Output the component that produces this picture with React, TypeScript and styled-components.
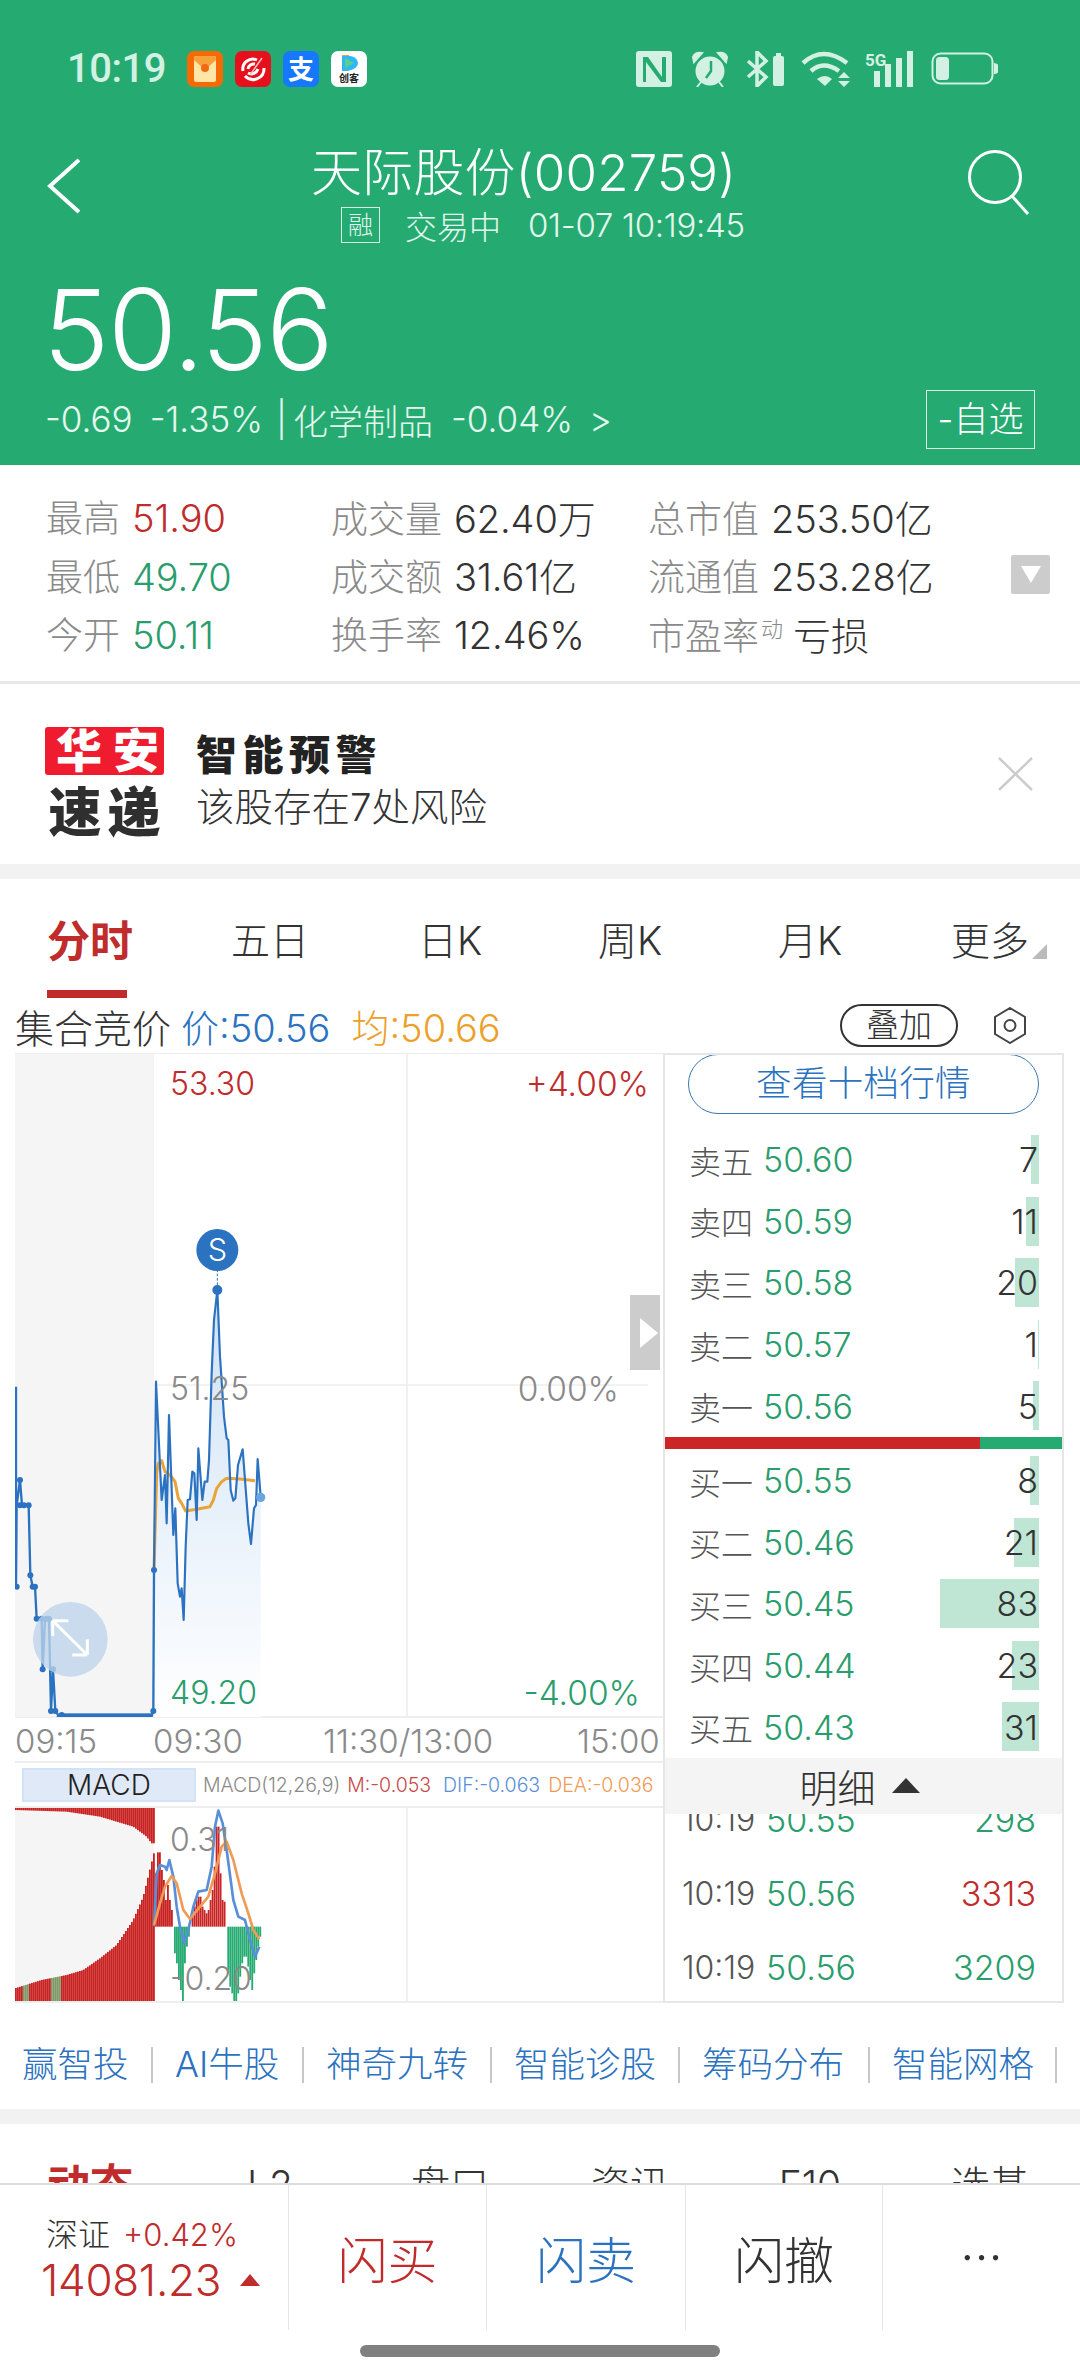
import { Fragment } from 'react'
import styled, { createGlobalStyle } from 'styled-components'

const GREEN = '#25ab71'
const RED = '#c02c2c'
const BLUE = '#2b72c0'
const UP = '#2a9d6c'
const FONT = `Inter, "Noto Sans CJK SC", sans-serif`

const GlobalStyle = createGlobalStyle`
  html, body {
    margin: 0;
    padding: 0;
    background: #fff;
    font-family: ${FONT};
  }
  * { box-sizing: border-box; }
`

const Page = styled.div`
  width: 1080px;
  height: 2378px;
  display: flex;
  flex-direction: column;
  overflow: hidden;
  background: #fff;
  color: #333;
`

const Scroll = styled.div`
  flex: 1;
  min-height: 0;
  overflow: hidden;
`

const Header = styled.header`
  height: 465px;
  background: ${GREEN};
  color: #fff;
`

const StatusBar = styled.div`
  height: 138px;
  padding: 51px 82px 0 67px;
  display: flex;
  align-items: flex-start;
  color: #d3f1e3;
`

const Clock = styled.span`
  font-family: Roboto, sans-serif;
  font-size: 40px;
  font-weight: 500;
  line-height: 36px;
  width: 120px;
  letter-spacing: -0.5px;
`

const AppIcons = styled.div`
  display: flex;
  gap: 12px;
`

const SysIcons = styled.div`
  margin-left: auto;
  display: flex;
  align-items: center;
  height: 36px;
`

const NavRow = styled.div`
  height: 68px;
  display: flex;
  align-items: center;
  padding: 0 50px 0 47px;
`

const BackButton = styled.svg`
  flex: none;
  margin-top: 28px;
`

const Title = styled.h1`
  margin: -6px 0 0 231px;
  font-size: 51px;
  font-weight: 300;
  white-space: nowrap;
  letter-spacing: 0.2px;
`

const SearchButton = styled.svg`
  margin-left: auto;
  margin-top: 22px;
`

const SubRow = styled.div`
  height: 38px;
  padding-left: 341px;
  display: flex;
  align-items: center;
  font-size: 32px;
  font-weight: 300;
  color: #e4f7ee;
  white-space: nowrap;
`

const RongTag = styled.span`
  width: 39px;
  height: 36px;
  border: 1px solid #d8f3e6;
  font-size: 25px;
  line-height: 34px;
  text-align: center;
  margin-right: 25px;
`

const SubTime = styled.span`
  margin-left: 27px;
  font-size: 33px;
  letter-spacing: -0.3px;
`

const Price = styled.div`
  margin-top: 21px;
  height: 124px;
  padding-left: 43px;
  font-size: 112px;
  line-height: 128px;
  font-weight: 300;
  letter-spacing: -1.5px;
`

const ChangeRow = styled.div`
  height: 60px;
  padding: 0 45px 0 45px;
  display: flex;
  align-items: center;
  font-size: 35px;
  font-weight: 300;
  color: #e4f7ee;
  white-space: nowrap;
`

const ChangeItem = styled.span<{ $gap: number }>`
  margin-left: ${p => p.$gap}px;
`

const Favorite = styled.span`
  margin-left: auto;
  width: 109px;
  height: 59px;
  border: 1px solid #d8f3e6;
  font-size: 35px;
  line-height: 57px;
  text-align: center;
  color: #fff;
`

const Stats = styled.section`
  height: 219px;
  padding: 22px 0 0 46px;
  display: grid;
  grid-template-columns: 285px 317px 363px 39px;
  grid-auto-rows: 58.5px;
  align-items: center;
  border-bottom: 3px solid #e8e8e8;
  white-space: nowrap;
`

const StatLabel = styled.span`
  font-size: 37px;
  font-weight: 300;
  color: #8a8a8a;
  margin-right: 12px;
`

const StatValue = styled.span<{ $color?: string }>`
  font-size: 38px;
  font-weight: 300;
  color: ${p => p.$color ?? '#333'};
  letter-spacing: -0.1px;
`

const StatNote = styled.sup`
  font-size: 22px;
  font-weight: 300;
  color: #8a8a8a;
  margin-left: -10px;
  margin-right: 10px;
  line-height: 0;
  position: relative;
  top: -6px;
`

const StatToggle = styled.span`
  width: 39px;
  height: 39px;
  background: #ccc;
  border-radius: 2px;
  display: flex;
  align-items: center;
  justify-content: center;
  &::after {
    content: '';
    border-left: 10px solid transparent;
    border-right: 10px solid transparent;
    border-top: 17px solid #fff;
  }
`

const Alert = styled.section`
  height: 180px;
  padding: 14px 0 0 45px;
  display: flex;
  align-items: center;
  gap: 32px;
`

const Badge = styled.div`
  width: 119px;
  display: flex;
  flex-direction: column;
  gap: 16px;
  align-items: center;
`

const BadgeTop = styled.div`
  width: 119px;
  height: 48px;
  background: #ee1c2e;
  border-radius: 3px;
  color: #fff;
  font-size: 46px;
  font-weight: 900;
  line-height: 46px;
  letter-spacing: 11px;
  text-indent: 11px;
  text-align: center;
  white-space: nowrap;
`

const BadgeBottom = styled.div`
  font-size: 53px;
  font-weight: 900;
  line-height: 44px;
  letter-spacing: 6px;
  margin-right: -6px;
  color: #2f2f2f;
  white-space: nowrap;
`

const AlertText = styled.div`
  display: flex;
  flex-direction: column;
  gap: 8px;
`

const AlertTitle = styled.div`
  font-size: 41px;
  font-weight: 900;
  line-height: 44px;
  letter-spacing: 5.5px;
  color: #222;
`

const AlertBody = styled.div`
  font-size: 38.5px;
  font-weight: 300;
  line-height: 44px;
  color: #333;
`

const Close = styled.svg`
  margin-left: auto;
  margin-right: 47px;
  margin-top: -14px;
`

const Band = styled.div`
  height: 15px;
  background: #f2f2f2;
`

const Tabs = styled.nav`
  height: 119px;
  display: grid;
  grid-template-columns: repeat(6, 180px);
`

const Tab = styled.div<{ $active?: boolean }>`
  position: relative;
  text-align: center;
  padding-top: 37px;
  font-size: ${p => (p.$active ? 43 : 39)}px;
  font-weight: ${p => (p.$active ? 700 : 300)};
  line-height: 50px;
  color: ${p => (p.$active ? RED : '#333')};
  &::after {
    content: '';
    display: ${p => (p.$active ? 'block' : 'none')};
    position: absolute;
    left: 47px;
    bottom: 0;
    width: 80px;
    height: 8px;
    background: ${RED};
  }
`

const MoreMark = styled.span`
  position: absolute;
  right: 33px;
  top: 65px;
  border-left: 15px solid transparent;
  border-bottom: 15px solid #bbb;
`

const ChartBar = styled.div`
  height: 55px;
  padding: 0 54px 0 15px;
  display: flex;
  align-items: center;
  font-size: 39px;
  font-weight: 300;
  white-space: nowrap;
`

const ChartStat = styled.span<{ $color: string; $gap: number }>`
  margin-left: ${p => p.$gap}px;
  font-size: 38px;
  color: ${p => p.$color};
`

const Overlay = styled.span`
  margin-left: auto;
  width: 118px;
  height: 43px;
  border: 2px solid #333;
  border-radius: 22px;
  font-size: 33px;
  line-height: 38px;
  text-align: center;
  margin-right: 36px;
`

const ChartGrid = styled.section`
  margin-left: 15px;
  height: 950px;
  width: 1049px;
  display: grid;
  grid-template-columns: 648px 401px;
`

const ChartColumn = styled.div`
  display: flex;
  flex-direction: column;
  min-width: 0;
`

const PricePane = styled.div`
  position: relative;
  height: 665px;
  border-top: 1px solid #eee;
  border-bottom: 2px solid #eee;
`

const PaneSvg = styled.svg`
  position: absolute;
  left: 0;
  top: 0;
  display: block;
`

const AxisLabel = styled.span<{ $top: number; $left?: number; $right?: number; $color: string; $size?: number }>`
  position: absolute;
  top: ${p => p.$top}px;
  ${p => (p.$left !== undefined ? `left: ${p.$left}px;` : '')}
  ${p => (p.$right !== undefined ? `right: ${p.$right}px;` : '')}
  color: ${p => p.$color};
  font-size: ${p => p.$size ?? 32}px;
  line-height: 40px;
  font-weight: 300;
`

const SideHandle = styled.div`
  position: absolute;
  right: 3px;
  top: 241px;
  width: 30px;
  height: 75px;
  background: #ccc;
  display: flex;
  align-items: center;
  justify-content: flex-end;
  padding-right: 2px;
  &::after {
    content: '';
    border-top: 15px solid transparent;
    border-bottom: 15px solid transparent;
    border-left: 18px solid #fff;
  }
`

const TimeRow = styled.div`
  height: 43px;
  display: flex;
  font-size: 33px;
  font-weight: 300;
  line-height: 47px;
  color: #8a8a8a;
  white-space: nowrap;
`

const TimeMark = styled.span<{ $width: number }>`
  flex: none;
  width: ${p => p.$width}px;
`

const MacdHeader = styled.div`
  height: 47px;
  border-top: 2px solid #eee;
  border-bottom: 2px solid #eee;
  padding-left: 7px;
  display: flex;
  align-items: center;
  font-size: 19.5px;
  font-weight: 300;
  white-space: nowrap;
`

const MacdTab = styled.span`
  flex: none;
  width: 174px;
  height: 34px;
  background: #dfe9f7;
  border: 2px solid #d3e2f6;
  text-align: center;
  font-size: 28px;
  line-height: 30px;
  font-weight: 300;
  color: #222;
  margin-right: 7px;
`

const MacdItem = styled.span<{ $color: string; $gap: number }>`
  color: ${p => p.$color};
  margin-left: ${p => p.$gap}px;
`

const MacdPane = styled.div`
  position: relative;
  height: 195px;
  border-bottom: 2px solid #eee;
  overflow: hidden;
`

const Book = styled.aside`
  height: 950px;
  border: 2px solid #e6e6e6;
  display: flex;
  flex-direction: column;
  overflow: hidden;
`

const TenLevel = styled.div`
  flex: none;
  margin: -1px 23px 0 23px;
  height: 60px;
  border: 1.5px solid #3a78b0;
  border-radius: 30px;
  color: ${BLUE};
  font-size: 35.5px;
  font-weight: 300;
  line-height: 57px;
  text-align: center;
  letter-spacing: 0.3px;
`

const Levels = styled.div<{ $top: number }>`
  flex: none;
  padding-top: ${p => p.$top}px;
`

const Level = styled.div`
  height: 61.6px;
  padding: 0 24px 0 24px;
  display: flex;
  align-items: center;
  position: relative;
`

const LevelName = styled.span`
  flex: none;
  font-size: 32px;
  font-weight: 300;
  color: #555;
  width: 74px;
`

const LevelPrice = styled.span`
  font-size: 34px;
  font-weight: 300;
  color: ${UP};
`

const LevelQty = styled.span`
  position: relative;
  margin-left: auto;
  font-size: 34px;
  font-weight: 300;
  color: #333;
  z-index: 1;
`

const VolumeBar = styled.span`
  position: absolute;
  right: 23px;
  top: 6px;
  height: 49px;
  background: #bfe6d4;
`

const Ratio = styled.div`
  flex: none;
  height: 12px;
  display: flex;
  background: ${GREEN};
`

const RatioBuy = styled.span`
  background: #cc2525;
`

const DetailBar = styled.div`
  flex: none;
  height: 56px;
  background: #f4f4f4;
  display: flex;
  align-items: center;
  justify-content: center;
  gap: 16px;
  padding-right: 8px;
  font-size: 38px;
  font-weight: 300;
  color: #333;
  position: relative;
  z-index: 1;
  &::after {
    content: '';
    border-left: 14px solid transparent;
    border-right: 14px solid transparent;
    border-bottom: 15px solid #333;
  }
`

const Trades = styled.div`
  flex: 1;
  min-height: 0;
  overflow: hidden;
`

const TradeList = styled.div`
  margin-top: -31px;
`

const Trade = styled.div<{ $color: string }>`
  height: 74px;
  padding: 0 26px 0 17px;
  display: flex;
  align-items: center;
  font-size: 34px;
  font-weight: 300;
  color: ${p => p.$color};
`

const TradeTime = styled.span`
  flex: none;
  font-size: 32px;
  color: #555;
  width: 84px;
`

const TradePrice = styled.span`
  color: ${UP};
  font-size: 34px;
  flex: 1;
`

const LinkRow = styled.div`
  height: 106px;
  padding: 18px 0 0 22px;
  display: flex;
  align-items: center;
  white-space: nowrap;
`

const ToolLink = styled.span<{ $width: number }>`
  width: ${p => p.$width}px;
  flex: none;
  height: 36px;
  line-height: 36px;
  color: ${BLUE};
  font-size: 35.5px;
  font-weight: 300;
  position: relative;
  &::after {
    content: '';
    position: absolute;
    right: 22px;
    top: 0;
    width: 2px;
    height: 36px;
    background: #c8c8c8;
  }
`

const SubTabs = styled.div`
  display: grid;
  grid-template-columns: repeat(6, 180px);
  padding-top: 36px;
`

const SubTab = styled.span<{ $active?: boolean }>`
  text-align: center;
  font-size: ${p => (p.$active ? 43 : 39)}px;
  font-weight: ${p => (p.$active ? 700 : 300)};
  line-height: 50px;
  color: ${p => (p.$active ? RED : '#333')};
`

const Footer = styled.footer`
  flex: none;
  height: 195px;
  background: #fff;
  border-top: 2px solid #ddd;
`

const FooterCells = styled.div`
  height: 145px;
  display: grid;
  grid-template-columns: 288px 198px 199px 197px 198px;
`

const IndexCell = styled.div`
  padding: 31px 0 0 41px;
  white-space: nowrap;
`

const IndexName = styled.div`
  font-size: 32px;
  line-height: 38px;
  font-weight: 300;
  padding-left: 5px;
`

const IndexChange = styled.span`
  color: ${RED};
  margin-left: 13px;
  font-size: 31px;
`

const IndexValue = styled.div`
  margin-top: 2px;
  font-size: 44px;
  line-height: 48px;
  font-weight: 300;
  color: ${RED};
  display: flex;
  align-items: center;
  letter-spacing: -0.3px;
  &::after {
    content: '';
    margin-left: 19px;
    border-left: 10px solid transparent;
    border-right: 10px solid transparent;
    border-bottom: 12px solid ${RED};
  }
`

const ActionCell = styled.div<{ $color: string }>`
  border-left: 1px solid #e6e6e6;
  display: flex;
  align-items: center;
  justify-content: center;
  padding-bottom: 2px;
  font-size: 50px;
  font-weight: 300;
  color: ${p => p.$color};
`

const HomeBar = styled.div`
  width: 360px;
  height: 12px;
  margin: 15px auto 0;
  border-radius: 6px;
  background: #808080;
`

const statRows: [string, string, string?, string?][] = [
  ['最高', '51.90', RED],
  ['成交量', '62.40万'],
  ['总市值', '253.50亿'],
  ['最低', '49.70', UP],
  ['成交额', '31.61亿'],
  ['流通值', '253.28亿'],
  ['今开', '50.11', UP],
  ['换手率', '12.46%'],
  ['市盈率', '亏损', undefined, '动'],
]

const asks = [
  ['卖五', '50.60', '7', 8],
  ['卖四', '50.59', '11', 13],
  ['卖三', '50.58', '20', 24],
  ['卖二', '50.57', '1', 1],
  ['卖一', '50.56', '5', 6],
] as const

const bids = [
  ['买一', '50.55', '8', 9],
  ['买二', '50.46', '21', 25],
  ['买三', '50.45', '83', 99],
  ['买四', '50.44', '23', 27],
  ['买五', '50.43', '31', 37],
] as const

const tools: [string, number][] = [
  ['赢智投', 153],
  ['AI牛股', 151],
  ['神奇九转', 188],
  ['智能诊股', 188],
  ['筹码分布', 190],
  ['智能网格', 187],
]

// chart coordinates are in the 3x scale the traces were measured at
const path = (pts: number[][]) => pts.map((p, i) => `${i ? 'L' : 'M'}${p[0]} ${p[1]}`).join(' ')

const pricePts = [
  [462, 690], [468, 125], [485, 480], [495, 405], [500, 550], [507, 225], [520, 585], [526, 505], [533, 730],
  [540, 770], [545, 745], [551, 840], [557, 620], [563, 480], [570, 478], [577, 395], [583, 400], [590, 540],
  [595, 325], [607, 480], [614, 425], [622, 425], [627, 360], [635, 100], [642, -60], [652, -150], [660, 50], [672, 230],
  [680, 295], [685, 300], [692, 450], [700, 482], [706, 475], [714, 375], [728, 328], [745, 550], [753, 612],
  [762, 505], [768, 495], [773, 357], [782, 470],
]

const auctionPts = [
  [48, 140], [48, 740], [50, 496], [60, 420], [66, 496], [86, 496], [91, 706], [98, 740], [105, 740], [110, 836], [125, 836],
  [128, 988], [135, 836], [147, 836], [153, 1113], [159, 988], [166, 1113], [178, 1130], [185, 1128], [455, 1128], [460, 1113], [462, 690],
]

const auctionDots = [
  [50, 740], [60, 420], [86, 496], [60, 496], [72, 496], [91, 706], [98, 740], [105, 740], [110, 836], [125, 836], [140, 836], [147, 836],
  [128, 988], [159, 988], [153, 1113], [166, 1113], [178, 1133], [185, 1125], [460, 1113], [462, 690],
]

const avgPts = [
  [462, 690], [470, 400], [475, 370], [485, 362], [495, 395], [510, 405], [525, 425], [535, 475], [545, 490], [557, 513],
  [590, 508], [630, 500], [640, 480], [650, 445], [665, 425], [680, 415], [720, 417], [765, 422],
]

const difPts = [
  [462, 678], [470, 520], [480, 495], [495, 500], [500, 510], [508, 480], [520, 530], [530, 620], [540, 680], [553, 730],
  [565, 690], [580, 620], [595, 575], [620, 570], [635, 500], [645, 380], [655, 332], [668, 370], [680, 450], [700, 600],
  [715, 650], [735, 660], [750, 720], [765, 770], [778, 740],
]

const deaPts = [
  [462, 675], [480, 610], [495, 560], [515, 528], [530, 550], [550, 630], [570, 657], [600, 620], [625, 590], [645, 520],
  [665, 440], [680, 425], [700, 480], [725, 580], [745, 640], [760, 690], [778, 718],
]

const upBars = [
  [468, 520], [474, 457], [480, 457], [486, 510], [492, 540], [498, 600], [504, 555], [510, 600], [516, 630],
  [578, 640], [584, 620], [590, 600], [596, 590], [602, 590], [608, 620], [614, 630], [620, 640], [626, 630], [632, 600],
  [638, 570], [644, 500], [650, 380], [656, 380], [662, 520], [668, 600], [674, 605],
]

const downBars = [
  [525, 760], [531, 790], [537, 840], [543, 870], [549, 905], [555, 790], [561, 740], [567, 710],
  [685, 820], [691, 860], [697, 880], [703, 905], [709, 905], [715, 880], [721, 830], [727, 790], [733, 770], [739, 770],
  [745, 800], [751, 840], [757, 870], [763, 820], [769, 780], [775, 740], [781, 710],
]

const lerp = (pts: number[][], x: number) => {
  for (let i = 1; i < pts.length; i++) {
    if (x <= pts[i][0]) {
      const [x0, y0] = pts[i - 1]
      const [x1, y1] = pts[i]
      return y0 + ((y1 - y0) * (x - x0)) / (x1 - x0)
    }
  }
  return pts[pts.length - 1][1]
}

const lowerEdge = [[45, 865], [125, 840], [200, 825], [250, 810], [300, 775], [350, 735], [400, 660], [430, 590], [462, 460]]
const upperEdge = [[45, 330], [200, 335], [300, 350], [400, 380], [440, 410], [455, 430], [462, 430]]
const auctionBars = Array.from({ length: 70 }, (_, i) => 48 + i * 6)

const Logo = ({ children, bg }: { children: React.ReactNode; bg: string }) => (
  <svg width="36" height="36" viewBox="0 0 36 36">
    <rect width="36" height="36" rx="7" fill={bg} />
    {children}
  </svg>
)

const PricePaneDrawing = () => (
  <PaneSvg width="648" height="663" viewBox="45 -858 1944 1989">
    <rect x="45" y="-858" width="417" height="1989" fill="#f5f5f5" />
    <line x1="462" y1="135" x2="1944" y2="135" stroke="#eee" strokeWidth="5" />
    <line x1="1221" y1="-858" x2="1221" y2="1131" stroke="#eee" strokeWidth="5" />
    <defs>
      <linearGradient id="priceFill" x1="0" y1="0" x2="0" y2="1">
        <stop offset="0" stopColor="#cfe2f6" />
        <stop offset="1" stopColor="#ffffff" />
      </linearGradient>
    </defs>
    <path d={`${path(pricePts)} L782 1131 L462 1131 Z`} fill="url(#priceFill)" />
    <path d={path(avgPts)} fill="none" stroke="#e8a33a" strokeWidth="9" strokeLinejoin="round" />
    <path d={path(auctionPts)} fill="none" stroke={BLUE} strokeWidth="7" strokeLinejoin="round" />
    <path d={path(pricePts)} fill="none" stroke={BLUE} strokeWidth="6.5" strokeLinejoin="round" />
    {auctionDots.map(([x, y]) => (
      <circle key={`${x}-${y}`} cx={x} cy={y} r="9" fill={BLUE} />
    ))}
    <rect x="180" y="1120" width="278" height="15" fill={BLUE} />
    <circle cx="782" cy="472" r="14" fill="#6aa5e0" />
    <circle cx="652" cy="-150" r="15" fill={BLUE} />
    <line x1="652" y1="-165" x2="652" y2="-213" stroke={BLUE} strokeWidth="3" strokeDasharray="8 5" />
    <circle cx="652" cy="-270" r="63" fill={BLUE} />
    <text x="652" y="-237" textAnchor="middle" fontSize="92" fontWeight="300" fontFamily="Inter, sans-serif" fill="#fff">S</text>
    <circle cx="211" cy="898" r="112" fill="#bcd3ea" fillOpacity="0.78" />
    <path d="M158 842 L262 945 M158 842 H205 M158 842 V888 M262 945 H217 M262 945 V898" fill="none" stroke="#fff" strokeWidth="9" />
  </PaneSvg>
)

const MacdDrawing = () => (
  <PaneSvg width="648" height="193" viewBox="45 324 1944 579">
    <rect x="45" y="324" width="417" height="579" fill="#f5f5f5" />
    <line x1="1221" y1="324" x2="1221" y2="909" stroke="#eee" strokeWidth="5" />
    {auctionBars.map(x => {
      const low = lerp(lowerEdge, x)
      const odd = (x > 66 && x < 90) || (x > 154 && x < 184)
      return (
        <g key={x}>
          <rect x={x - 3} y={low} width="5.5" height={909 - low} fill={odd ? '#7f9a68' : '#c92222'} />
          <rect x={x - 3} y="324" width="5.5" height={lerp(upperEdge, x) - 324} fill="#c92222" />
        </g>
      )
    })}
    {upBars.map(([x, y]) => (
      <rect key={x} x={x - 3} y={y} width="5.5" height={680 - y} fill="#c92222" />
    ))}
    {downBars.map(([x, y]) => (
      <rect key={x} x={x - 3} y="680" width="5.5" height={y - 680} fill={GREEN} />
    ))}
    <path d={path(difPts)} fill="none" stroke="#5a8fd8" strokeWidth="8" strokeLinejoin="round" />
    <path d={path(deaPts)} fill="none" stroke="#ef9a55" strokeWidth="8" strokeLinejoin="round" />
  </PaneSvg>
)

export default function App() {
  return (
    <Page>
      <GlobalStyle />
      <Scroll>
        <Header>
          <StatusBar>
            <Clock>10:19</Clock>
            <AppIcons>
              <Logo bg="#f66a05">
                <rect x="7" y="5" width="22" height="26" rx="2" fill="#ffe5a6" />
                <path d="M7 9 L18 19 L29 9 V7 a2 2 0 0 0-2-2 H9 a2 2 0 0 0-2 2 Z" fill="#f7a13c" />
                <circle cx="18" cy="17" r="4" fill="#ef6a10" />
              </Logo>
              <Logo bg="#e60f1b">
                <path d="M8 20 a10 10 0 0 1 14-11 M10 25 a11 11 0 0 0 19-8 M13 22 a7 7 0 0 0 10-4 M13 18 a6 6 0 0 1 7-5" fill="none" stroke="#fff" strokeWidth="3" />
                <path d="M15 24 L27 7" stroke="#f8c0c0" strokeWidth="1.5" />
              </Logo>
              <Logo bg="#1677ff">
                <text x="18" y="28" textAnchor="middle" fontSize="26" fontWeight="700" fill="#fff" fontFamily="'Noto Sans CJK SC', sans-serif">支</text>
              </Logo>
              <Logo bg="#ffffff">
                <path d="M11 4 L11 20 L18 20 L18 4 Z" fill="#f6a623" />
                <path d="M11 5 Q26 3 27 12 Q26 20 11 20 Z" fill="#2fb7f5" />
                <path d="M14 7 L23 12 L14 17 Z" fill="#59d08b" />
                <text x="18" y="31" textAnchor="middle" fontSize="10" fontWeight="700" fill="#222" fontFamily="'Noto Sans CJK SC', sans-serif">创客</text>
              </Logo>
            </AppIcons>
            <SysIcons>
              <svg width="362" height="36" viewBox="0 0 362 36" fill="currentColor">
                <path fillRule="evenodd" d="M3 0 H33 a3 3 0 0 1 3 3 V33 a3 3 0 0 1-3 3 H3 a3 3 0 0 1-3-3 V3 a3 3 0 0 1 3-3 Z M7 6 V31 H10 V11 L25 31 H30 V6 H26 V26 L12 6 Z" />
                <g transform="translate(56 0)">
                  <circle cx="18" cy="20" r="14.5" />
                  <path d="M2 11 L10 2 Q3 1 1 6 Z M34 11 L26 2 Q33 1 35 6 Z M9 31 L5 36 M27 31 L31 36" stroke="currentColor" strokeWidth="2" />
                  <path d="M19 10 V20 L14 27" fill="none" stroke={GREEN} strokeWidth="2.5" />
                </g>
                <g transform="translate(110 0)">
                  <path d="M2 10 L20 26 L11 35 V1 L20 10 L2 26" fill="none" stroke="currentColor" strokeWidth="3.5" />
                  <rect x="27" y="5" width="11" height="30" rx="2" />
                  <rect x="30" y="2" width="5" height="3" />
                </g>
                <g transform="translate(165 0)" fill="none" stroke="currentColor" strokeWidth="4.5">
                  <path d="M2 12 Q22 -6 46 12 M10 20 Q22 9 38 20" />
                  <path d="M16 28 L24 35 L31 28 Q24 22 16 28 Z" fill="currentColor" stroke="none" />
                  <path d="M38 28 L44 22 L50 28 Z M38 31 H50 L44 37 Z" fill="currentColor" stroke="none" transform="translate(-1 -1)" />
                </g>
                <g transform="translate(229 0)">
                  <text x="0" y="15" fontSize="17" fontWeight="700" fontFamily="Roboto, sans-serif">5G</text>
                  <rect x="9" y="20" width="6" height="16" />
                  <rect x="20" y="13" width="6" height="23" />
                  <rect x="31" y="7" width="6" height="29" />
                  <rect x="42" y="0" width="6" height="36" />
                </g>
                <g transform="translate(295 1)">
                  <rect x="1.5" y="1.5" width="60" height="30" rx="8" fill="none" stroke="currentColor" strokeWidth="2" />
                  <rect x="5" y="5" width="13" height="23" rx="3.5" />
                  <path d="M63 11 a5 5 0 0 1 0 11 Z" />
                </g>
              </svg>
            </SysIcons>
          </StatusBar>
          <NavRow>
            <BackButton width="33" height="56" viewBox="0 0 33 56" fill="none" stroke="#fff" strokeWidth="4">
              <path d="M32 2 L3 28 L32 54" />
            </BackButton>
            <Title>天际股份(002759)</Title>
            <SearchButton width="64" height="66" viewBox="0 0 64 66" fill="none" stroke="#fff" strokeWidth="3">
              <circle cx="29" cy="27" r="25.5" />
              <path d="M46 46 L62 64" />
            </SearchButton>
          </NavRow>
          <SubRow>
            <RongTag>融</RongTag>
            <span>交易中</span>
            <SubTime>01-07 10:19:45</SubTime>
          </SubRow>
          <Price>50.56</Price>
          <ChangeRow>
            <span>-0.69</span>
            <ChangeItem $gap={17}>-1.35%</ChangeItem>
            <ChangeItem $gap={13}>|</ChangeItem>
            <ChangeItem $gap={6}>化学制品</ChangeItem>
            <ChangeItem $gap={18}>-0.04%</ChangeItem>
            <ChangeItem $gap={16}>&gt;</ChangeItem>
            <Favorite>-自选</Favorite>
          </ChangeRow>
        </Header>

        <Stats>
          {statRows.map(([label, value, color, note], i) => (
            <Fragment key={label}>
              <span>
                <StatLabel>{label}</StatLabel>
                {note && <StatNote>{note}</StatNote>}
                <StatValue $color={color}>{value}</StatValue>
              </span>
              {i === 2 && <span />}
              {i === 5 && <StatToggle />}
            </Fragment>
          ))}
        </Stats>

        <Alert>
          <Badge>
            <BadgeTop>华安</BadgeTop>
            <BadgeBottom>速递</BadgeBottom>
          </Badge>
          <AlertText>
            <AlertTitle>智能预警</AlertTitle>
            <AlertBody>该股存在7处风险</AlertBody>
          </AlertText>
          <Close width="35" height="34" viewBox="0 0 35 34" stroke="#ccc" strokeWidth="2.5">
            <path d="M1 1 L34 33 M34 1 L1 33" />
          </Close>
        </Alert>
        <Band />

        <Tabs>
          <Tab $active>分时</Tab>
          <Tab>五日</Tab>
          <Tab>日K</Tab>
          <Tab>周K</Tab>
          <Tab>月K</Tab>
          <Tab>
            更多
            <MoreMark />
          </Tab>
        </Tabs>

        <ChartBar>
          集合竞价
          <ChartStat $color={BLUE} $gap={10}>价:50.56</ChartStat>
          <ChartStat $color="#ec9f2b" $gap={21}>均:50.66</ChartStat>
          <Overlay>叠加</Overlay>
          <svg width="32" height="37" viewBox="0 0 32 37" fill="none" stroke="#444" strokeWidth="2">
            <path d="M16 1 L31 10 V27 L16 36 L1 27 V10 Z" />
            <circle cx="16" cy="18.5" r="5.5" />
          </svg>
        </ChartBar>

        <ChartGrid>
          <ChartColumn>
            <PricePane>
              <PricePaneDrawing />
              <AxisLabel $top={10} $left={155} $color={RED}>53.30</AxisLabel>
              <AxisLabel $top={315} $left={155} $color="#8a8a8a">51.25</AxisLabel>
              <AxisLabel $top={619} $left={155} $color={UP}>49.20</AxisLabel>
              <AxisLabel $top={10} $right={14} $size={33.5} $color={RED}>+4.00%</AxisLabel>
              <AxisLabel $top={315} $right={44} $size={33.5} $color="#8a8a8a">0.00%</AxisLabel>
              <AxisLabel $top={619} $right={23} $size={33.5} $color={UP}>-4.00%</AxisLabel>
              <SideHandle />
            </PricePane>
            <TimeRow>
              <TimeMark $width={138}>09:15</TimeMark>
              <TimeMark $width={170}>09:30</TimeMark>
              <TimeMark $width={254}>11:30/13:00</TimeMark>
              <span>15:00</span>
            </TimeRow>
            <MacdHeader>
              <MacdTab>MACD</MacdTab>
              <MacdItem $color="#8a8a8a" $gap={0}>MACD(12,26,9)</MacdItem>
              <MacdItem $color="#c84a4a" $gap={7}>M:-0.053</MacdItem>
              <MacdItem $color="#5a8fd8" $gap={12}>DIF:-0.063</MacdItem>
              <MacdItem $color="#ef9a55" $gap={8}>DEA:-0.036</MacdItem>
            </MacdHeader>
            <MacdPane>
              <MacdDrawing />
              <AxisLabel $top={12} $left={155} $color="#8a8a8a">0.31</AxisLabel>
              <AxisLabel $top={151} $left={155} $color="#8a8a8a">-0.20</AxisLabel>
            </MacdPane>
          </ChartColumn>

          <Book>
            <TenLevel>查看十档行情</TenLevel>
            <Levels $top={15}>
              {asks.map(([name, price, qty, bar]) => (
                <Level key={name}>
                  <VolumeBar style={{ width: bar }} />
                  <LevelName>{name}</LevelName>
                  <LevelPrice>{price}</LevelPrice>
                  <LevelQty>{qty}</LevelQty>
                </Level>
              ))}
            </Levels>
            <Ratio>
              <RatioBuy style={{ width: 315 }} />
            </Ratio>
            <Levels $top={1}>
              {bids.map(([name, price, qty, bar]) => (
                <Level key={name}>
                  <VolumeBar style={{ width: bar }} />
                  <LevelName>{name}</LevelName>
                  <LevelPrice>{price}</LevelPrice>
                  <LevelQty>{qty}</LevelQty>
                </Level>
              ))}
            </Levels>
            <DetailBar>明细</DetailBar>
            <Trades>
              <TradeList>
                <Trade $color={UP}><TradeTime>10:19</TradeTime><TradePrice>50.55</TradePrice>298</Trade>
                <Trade $color={RED}><TradeTime>10:19</TradeTime><TradePrice>50.56</TradePrice>3313</Trade>
                <Trade $color={UP}><TradeTime>10:19</TradeTime><TradePrice>50.56</TradePrice>3209</Trade>
              </TradeList>
            </Trades>
          </Book>
        </ChartGrid>

        <LinkRow>
          {tools.map(([name, width]) => (
            <ToolLink key={name} $width={width}>{name}</ToolLink>
          ))}
        </LinkRow>
        <Band />
        <SubTabs>
          <SubTab $active>动态</SubTab>
          <SubTab>L2</SubTab>
          <SubTab>盘口</SubTab>
          <SubTab>资讯</SubTab>
          <SubTab>F10</SubTab>
          <SubTab>选基</SubTab>
        </SubTabs>
      </Scroll>

      <Footer>
        <FooterCells>
          <IndexCell>
            <IndexName>深证<IndexChange>+0.42%</IndexChange></IndexName>
            <IndexValue>14081.23</IndexValue>
          </IndexCell>
          <ActionCell $color={RED}>闪买</ActionCell>
          <ActionCell $color={BLUE}>闪卖</ActionCell>
          <ActionCell $color="#333">闪撤</ActionCell>
          <ActionCell $color="#333">···</ActionCell>
        </FooterCells>
        <HomeBar />
      </Footer>
    </Page>
  )
}
